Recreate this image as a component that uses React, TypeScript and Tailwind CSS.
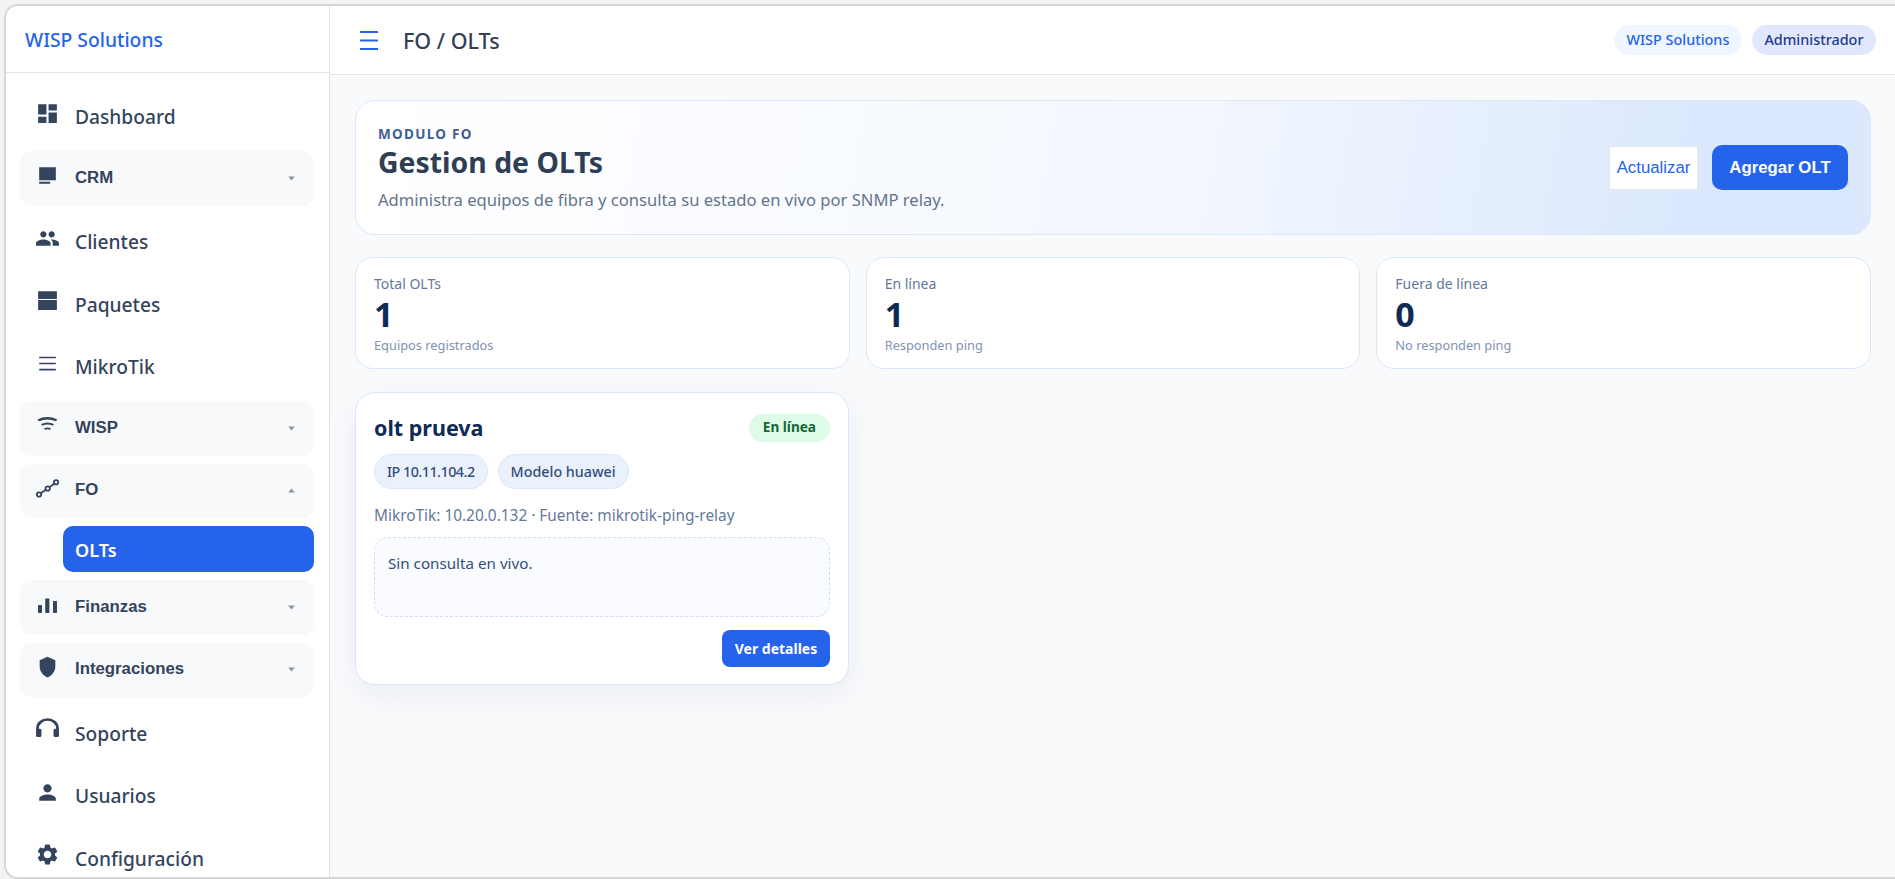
import React from 'react';
import { MdDashboard, MdPeople, MdPerson, MdSettings } from 'react-icons/md';

type IconProps = { className?: string };

const CrmIcon = ({ className }: IconProps) => (
  <svg viewBox="0 0 24 24" fill="currentColor" className={className}>
    <path d="M4 4h16v12.5H4z M4 18h10.5v1.8H4z" />
  </svg>
);

const PackageIcon = ({ className }: IconProps) => (
  <svg viewBox="0 0 24 24" fill="currentColor" className={className}>
    <path d="M3 3h18v7.5H3z M3 11.5h18V21H3z" />
  </svg>
);

const LinesIcon = ({ className }: IconProps) => (
  <svg viewBox="0 0 24 24" fill="currentColor" className={className}>
    <path d="M4 5.4h16V7H4z M4 11.2h16v1.6H4z M4 17h16v1.6H4z" />
  </svg>
);

const WispIcon = ({ className }: IconProps) => (
  <svg viewBox="0 0 24 24" fill="currentColor" className={className}>
    <path d="M2.2 6.2 Q12 1.5 21.4 6.2 L20 8 Q12 4.5 4 8 Z M5.8 10.5 Q12 7.6 18.2 10.5 L17 12.2 Q12 10 7 12.2 Z M8.6 14.6 Q12 13 15.4 14.6 L14.4 16 Q12 15 9.6 16 Z" />
  </svg>
);

const FiberIcon = ({ className }: IconProps) => (
  <svg viewBox="0 0 24 24" fill="none" stroke="currentColor" strokeWidth="1.7" className={className}>
    <circle cx="3.84" cy="17.8" r="2.1" />
    <circle cx="12.2" cy="12" r="2.1" />
    <circle cx="20.2" cy="6" r="2.1" />
    <path d="M5.6 16.6 L10.4 13.3 M14 10.7 L18.4 7.4" />
  </svg>
);

const BarsIcon = ({ className }: IconProps) => (
  <svg viewBox="0 0 24 24" fill="currentColor" className={className}>
    <rect x="2.9" y="12.4" width="3.8" height="7.7" rx="0.6" />
    <rect x="9.8" y="6.3" width="4" height="13.8" rx="0.6" />
    <rect x="17.3" y="8.6" width="3.8" height="11.5" rx="0.6" />
  </svg>
);

const ShieldIcon = ({ className }: IconProps) => (
  <svg viewBox="0 0 24 24" fill="currentColor" className={className}>
    <path d="M12 1.7 L19.5 5 V11 C19.5 16 16 20 12 21.5 C8 20 4.5 16 4.5 11 V5 Z" />
  </svg>
);

const HeadsetIcon = ({ className }: IconProps) => (
  <svg viewBox="0 0 24 24" className={className}>
    <path d="M2.4 13 v-2 a9.6 8.6 0 0 1 19.2 0 v2" fill="none" stroke="currentColor" strokeWidth="2.6" />
    <rect x="1" y="11.2" width="5.2" height="8" rx="1.5" fill="currentColor" />
    <rect x="17.8" y="11.2" width="5.2" height="8" rx="1.5" fill="currentColor" />
  </svg>
);

const Caret = ({ up = false }: { up?: boolean }) => (
  <svg viewBox="0 0 8 6" className="w-[7px] h-[5px] fill-[#8a93a3]">
    <path d={up ? 'M4 .5 L8 5.5 H0 Z' : 'M0 .5 H8 L4 5.5 Z'} />
  </svg>
);

const NavLink = ({ icon: Icon, label }: { icon: React.ComponentType<IconProps>; label: string }) => (
  <div className="flex items-center h-[54.5px] pl-[15px] text-[#33445c]">
    <Icon className="w-[25px] h-[25px] -mt-[5px]" />
    <span className="ml-[15px] mt-[2px] text-[19.2px] font-medium leading-none">{label}</span>
  </div>
);

const NavGroup = ({ icon: Icon, label, open = false }: { icon: React.ComponentType<IconProps>; label: string; open?: boolean }) => (
  <div className="flex items-center h-[54.5px] rounded-[12px] bg-[#f8f9fb] pl-[15px] pr-[19px] text-[#33445c]">
    <Icon className="w-[25px] h-[25px] -mt-[5px]" />
    <span className="ml-[15px] text-[16.8px] font-bold leading-none font-['Liberation_Sans',sans-serif]">{label}</span>
    <span className="ml-auto">
      <Caret up={open} />
    </span>
  </div>
);

const Stat = ({ label, value, hint }: { label: string; value: string; hint: string }) => (
  <div className="flex-1 h-[112px] rounded-[18px] border border-[#dbe7fb] bg-white px-[18px] pt-[16px]">
    <div className="text-[14px] leading-[20px] text-[#64789b]">{label}</div>
    <div className="mt-[1px] text-[34px] font-bold leading-[38px] text-[#0f2a55]">{value}</div>
    <div className="mt-[2px] text-[12.8px] leading-[20px] text-[#7f93b2]">{hint}</div>
  </div>
);

export default function App() {
  return (
    <div className="h-screen overflow-hidden bg-[#f3f3f3] pt-[4px] pl-[4px] font-['Noto_Sans',sans-serif]">
      <div className="flex h-full overflow-hidden rounded-l-[14px] border-2 border-r-0 border-[#d6d6d6] bg-[#f8fafc]">
        <aside className="w-[324px] shrink-0 border-r border-[#e2e4e8] bg-white">
          <div className="flex items-center h-[67px] border-b border-[#e2e4e8] pl-[19px]">
            <span className="mt-[3px] text-[19.3px] font-medium text-[#2563eb]">WISP Solutions</span>
          </div>
          <nav className="flex flex-col gap-[8px] pt-[15.5px] pl-[14px] pr-[15px]">
            <NavLink icon={MdDashboard} label="Dashboard" />
            <NavGroup icon={CrmIcon} label="CRM" />
            <NavLink icon={MdPeople} label="Clientes" />
            <NavLink icon={PackageIcon} label="Paquetes" />
            <NavLink icon={LinesIcon} label="MikroTik" />
            <NavGroup icon={WispIcon} label="WISP" />
            <NavGroup icon={FiberIcon} label="FO" open />
            <div className="flex items-center h-[46px] ml-[43px] rounded-[10px] bg-[#2563eb] pl-[12px] pt-[3px] text-[18px] font-semibold text-white">
              OLTs
            </div>
            <NavGroup icon={BarsIcon} label="Finanzas" />
            <NavGroup icon={ShieldIcon} label="Integraciones" />
            <NavLink icon={HeadsetIcon} label="Soporte" />
            <NavLink icon={MdPerson} label="Usuarios" />
            <NavLink icon={MdSettings} label="Configuración" />
          </nav>
        </aside>

        <main className="flex-1 min-w-0">
          <header className="flex items-center h-[69px] border-b border-[#e2e4e8] bg-white pl-[30px] pr-[19px]">
            <svg viewBox="0 0 18 19" className="w-[18px] h-[19px] stroke-[#2563eb] stroke-2">
              <path d="M0 1 H18 M0 9.5 H18 M0 18 H18" />
            </svg>
            <h1 className="ml-[25px] mt-[3px] text-[21.5px] font-medium text-[#334155]">FO / OLTs</h1>
            <div className="ml-auto flex gap-[10px] text-[14.4px] font-medium">
              <span className="flex items-center h-[30px] rounded-full bg-[#eff6ff] px-[12.5px] text-[#2563eb]">WISP Solutions</span>
              <span className="flex items-center h-[30px] rounded-full bg-[#e0e7ff] px-[12.5px] text-[#1e3a8a]">Administrador</span>
            </div>
          </header>

          <div className="flex flex-col pt-[25px] pl-[25px] pr-[24px]">
            <section className="flex items-center justify-between h-[135px] rounded-[20px] border border-[#dbe7fb] bg-[linear-gradient(100deg,#ffffff_0%,#f3f7fe_55%,#dbe8fd_88%)] pl-[22px] pr-[22px]">
              <div className="pt-[3px]">
                <div className="text-[13.5px] font-bold leading-[16px] tracking-[1.3px] text-[#3f5f94]">MODULO FO</div>
                <h2 className="mt-[1px] text-[28.4px] font-bold leading-[38px] text-[#2f3e55]">Gestion de OLTs</h2>
                <p className="mt-[7px] text-[16.6px] leading-[24px] text-[#64748b]">
                  Administra equipos de fibra y consulta su estado en vivo por SNMP relay.
                </p>
              </div>
              <div className="flex items-center gap-[14px] font-['Liberation_Sans',sans-serif] text-[16.8px]">
                <button className="h-[44px] w-[89px] border border-[#e5e7eb] bg-white text-[#2563eb]">Actualizar</button>
                <button className="h-[45px] w-[136px] rounded-[10px] bg-[#2563eb] font-bold text-white">Agregar OLT</button>
              </div>
            </section>

            <div className="mt-[22px] flex gap-[16px]">
              <Stat label="Total OLTs" value="1" hint="Equipos registrados" />
              <Stat label="En línea" value="1" hint="Responden ping" />
              <Stat label="Fuera de línea" value="0" hint="No responden ping" />
            </div>

            <article className="mt-[23px] w-[494px] h-[293px] rounded-[20px] border border-[#dbe7fb] bg-white px-[18px] pt-[19px] shadow-[0_10px_30px_rgba(15,42,85,0.06)]">
              <div className="flex items-center justify-between">
                <h3 className="mt-[1px] text-[21.5px] font-bold leading-[30px] text-[#0f2a55]">olt prueva</h3>
                <span className="flex items-center h-[28px] rounded-full bg-[#dcfce7] px-[14px] text-[13.6px] font-bold text-[#166534]">
                  En línea
                </span>
              </div>
              <div className="mt-[11px] flex gap-[10px] text-[14.3px] font-medium text-[#334e78]">
                <span className="flex items-center h-[35px] rounded-full border border-[#dbe7fb] bg-[#eaf1fd] px-[12px] tracking-[-0.5px]">IP 10.11.104.2</span>
                <span className="flex items-center h-[35px] rounded-full border border-[#dbe7fb] bg-[#eaf1fd] px-[12px]">Modelo huawei</span>
              </div>
              <p className="mt-[16px] text-[15.4px] leading-[22px] text-[#64789b]">MikroTik: 10.20.0.132 · Fuente: mikrotik-ping-relay</p>
              <div className="mt-[10px] h-[80px] rounded-[14px] border border-dashed border-[#cfdff8] bg-[#f9fbff] px-[13px] pt-[14px] text-[15.2px] leading-[22px] text-[#334e78]">
                Sin consulta en vivo.
              </div>
              <div className="mt-[13px] flex justify-end">
                <button className="h-[37px] w-[108px] rounded-[8px] bg-[#2563eb] text-[14px] font-bold text-white">Ver detalles</button>
              </div>
            </article>
          </div>
        </main>
      </div>
    </div>
  );
}
